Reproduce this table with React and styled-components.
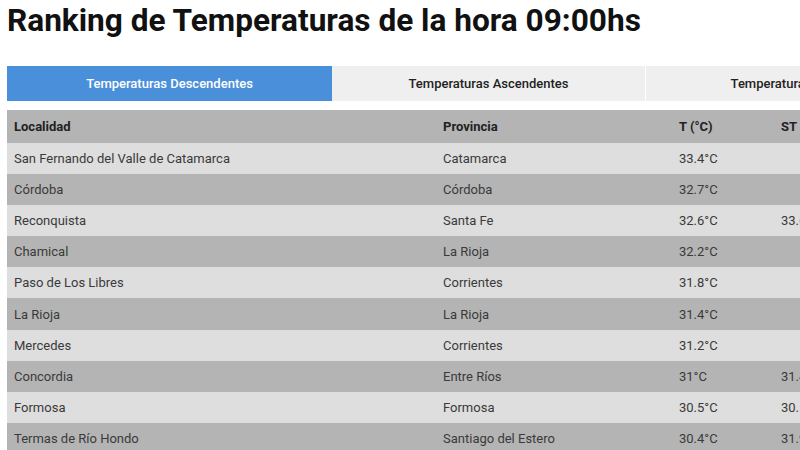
import React from 'react';
import styled, { createGlobalStyle } from 'styled-components';

const Global = createGlobalStyle`
  body {
    margin: 0;
    background: #fff;
    font-family: Roboto, "Liberation Sans", sans-serif;
    overflow: hidden;
  }
`;

const Page = styled.div`
  padding: 0 7px;
  width: 1100px;
`;

const Title = styled.h1`
  margin: 0;
  padding-top: 2px;
  height: 64px;
  font-size: 31.6px;
  line-height: 38px;
  font-weight: 700;
  color: #111;
`;

const Tabs = styled.div`
  display: flex;
  height: 35px;
  margin-bottom: 9px;
`;

const Tab = styled.div`
  width: ${(p) => p.$w}px;
  display: flex;
  align-items: center;
  justify-content: center;
  font-size: 13px;
  font-weight: 500;
  color: ${(p) => (p.$active ? '#fff' : '#222')};
  background: ${(p) => (p.$active ? '#4a8fd9' : '#efefef')};
  border-left: ${(p) => (p.$sep ? '1px solid #fff' : 'none')};
`;

const Table = styled.table`
  border-collapse: collapse;
  table-layout: fixed;
  width: 1000px;
  font-size: 13px;
  color: #3a3a3a;
`;

const Row = styled.tr`
  height: ${(p) => (p.$head ? 33 : 31.1)}px;
  background: ${(p) => (p.$dark ? '#b4b4b4' : '#dedede')};
`;

const Th = styled.th`
  text-align: left;
  font-weight: 700;
  color: #222;
  padding: 0 7px;
  width: ${(p) => p.$w}px;
`;

const Td = styled.td`
  padding: 0 7px;
  white-space: nowrap;
`;

const rows = [
  ['San Fernando del Valle de Catamarca', 'Catamarca', '33.4°C', ''],
  ['Córdoba', 'Córdoba', '32.7°C', ''],
  ['Reconquista', 'Santa Fe', '32.6°C', '33.6°C'],
  ['Chamical', 'La Rioja', '32.2°C', ''],
  ['Paso de Los Libres', 'Corrientes', '31.8°C', ''],
  ['La Rioja', 'La Rioja', '31.4°C', ''],
  ['Mercedes', 'Corrientes', '31.2°C', ''],
  ['Concordia', 'Entre Ríos', '31°C', '31.4°C'],
  ['Formosa', 'Formosa', '30.5°C', '30.5°C'],
  ['Termas de Río Hondo', 'Santiago del Estero', '30.4°C', '31.9°C'],
];

export default function App() {
  return (
    <Page>
      <Global />
      <Title>Ranking de Temperaturas de la hora 09:00hs</Title>
      <Tabs>
        <Tab $w={325} $active>Temperaturas Descendentes</Tab>
        <Tab $w={313}>Temperaturas Ascendentes</Tab>
        <Tab $w={364} $sep>Temperaturas Sensación Térmica</Tab>
      </Tabs>
      <Table>
        <thead>
          <Row $dark $head>
            <Th $w={415}>Localidad</Th>
            <Th $w={222}>Provincia</Th>
            <Th $w={88}>T (°C)</Th>
            <Th $w={106}>ST (°C)</Th>
            <Th $w={99}>Humedad</Th>
          </Row>
        </thead>
        <tbody>
          {rows.map((r, i) => (
            <Row key={i} $dark={i % 2 === 1}>
              <Td>{r[0]}</Td>
              <Td>{r[1]}</Td>
              <Td>{r[2]}</Td>
              <Td>{r[3]}</Td>
              <Td></Td>
            </Row>
          ))}
        </tbody>
      </Table>
    </Page>
  );
}
